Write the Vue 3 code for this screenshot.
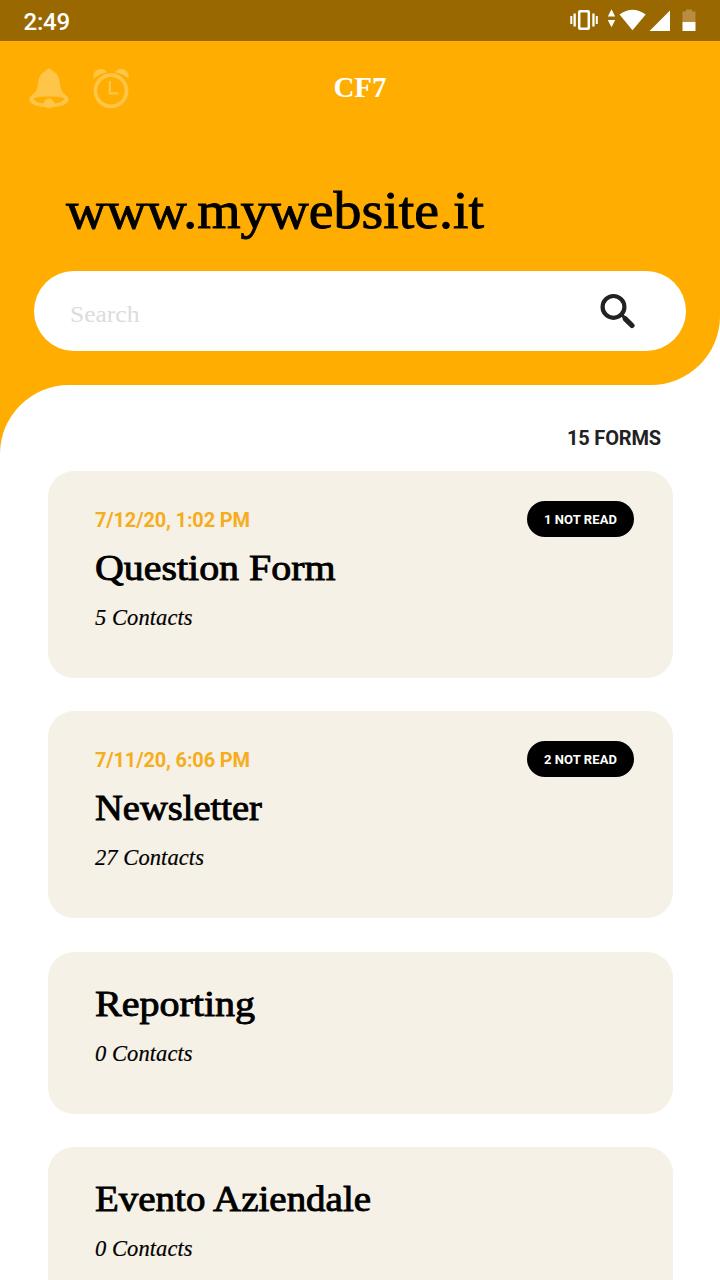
<script setup>
const forms = [
  { date: '7/12/20, 1:02 PM', unread: 1, name: 'Question Form', contacts: 5, stretch: 1.108 },
  { date: '7/11/20, 6:06 PM', unread: 2, name: 'Newsletter', contacts: 27, stretch: 1.07 },
  { name: 'Reporting', contacts: 0, stretch: 1.112 },
  { name: 'Evento Aziendale', contacts: 0, stretch: 1.083 },
]
</script>

<template>
  <div class="screen">
    <header class="top">
      <div class="status">
        <span class="clock">2:49</span>
        <svg class="indicators" width="130" height="24" viewBox="0 0 130 24" fill="#fff">
          <path d="M.3 8h2v8h-2zM3.500 5.500h2.300v13H3.500zM22.300 5.500h2.300v13h-2.300zM25.800 8h2v8h-2z" />
          <rect x="9.200" y="3.200" width="9.600" height="17.600" rx="1" fill="none" stroke="#fff" stroke-width="2.500" />
          <path d="M41.500 1.200l3.700 7.300h-7.400zM41.500 19.200l3.700-7.200h-7.400z" />
          <path d="M49.500 6.500Q62.500-3 75.700 6.500L62.500 22.200z" />
          <path d="M100 2.500V23H79.500z" />
          <path d="M116 1.500h6v2h3.500v10.500h-13V3.500h3.500z" fill="#b98d3f" />
          <path d="M112.500 14h13v9h-13z" />
        </svg>
      </div>
      <div class="toolbar">
        <div class="tools">
          <svg width="40" height="42" viewBox="0 0 40 42" fill="#ffc549">
            <path d="M20 .5c1.500 0 2.600 1 3.200 2.600C28.500 5 30.300 10 30.900 15.500c.7 6.500 2.400 8.500 5.400 11 2.200 1.700 3.400 3.200 3.400 5.300 0 4.500-8.700 7.500-19.700 7.500S.3 36.300.3 31.800c0-2.100 1.200-3.600 3.400-5.300 3-2.500 4.700-4.500 5.400-11C9.700 10 11.500 5 16.800 3.100 17.400 1.500 18.500.5 20 .5z" />
            <path d="M4.500 30.500C8 27.800 32 27.800 35.500 30.500 34 33.500 30 35 25.500 35.500 24 30.500 16 30.500 14.500 35.500 10 35 6 33.500 4.500 30.500z" fill="#ffad00" />
            <circle cx="20" cy="35.500" r="5" />
          </svg>
          <svg width="36" height="42" viewBox="0 0 36 42" fill="#ffc549">
            <path d="M.5 10.500C-.5 4.500 3.500.8 8 1c2.800.1 4.800 1.300 6 3.200C8.500 5 4 7.500.5 10.500zM35.500 10.500C36.500 4.500 32.500.8 28 1c-2.800.1-4.800 1.300-6 3.200 5.500.8 10 3.300 13.500 6.300z" />
            <circle cx="18" cy="22.800" r="15.600" fill="none" stroke="#ffc549" stroke-width="3.700" />
            <path d="M16.800 13v12.300h8.700" fill="none" stroke="#ffc549" stroke-width="2.200" />
          </svg>
        </div>
        <div class="brand">CF7</div>
      </div>
      <h1 class="site">www.mywebsite.it</h1>
      <div class="search">
        <span class="hint">Search</span>
        <svg width="36" height="36" viewBox="0 0 36 36">
          <circle cx="13.500" cy="13.900" r="10.900" fill="none" stroke="#222" stroke-width="4.200" />
          <path d="M21.500 21.700l3.500 3.500" stroke="#222" stroke-width="3.200" />
          <path d="M25.300 25.800l6.700 6.700" stroke="#222" stroke-width="5.200" stroke-linecap="round" />
        </svg>
      </div>
    </header>

    <main class="panel">
      <div class="count">15 FORMS</div>
      <section class="list">
        <article v-for="form in forms" :key="form.name" class="card" :class="{ dated: form.date }">
          <div v-if="form.date" class="meta">
            <span class="date">{{ form.date }}</span>
            <span class="badge">{{ form.unread }} NOT READ</span>
          </div>
          <h2 class="name" :style="{ transform: `scaleX(${form.stretch})` }">{{ form.name }}</h2>
          <p class="contacts">{{ form.contacts }} Contacts</p>
        </article>
      </section>
    </main>
  </div>
</template>

<style>
body {
  margin: 0;
  overflow: hidden;
}
</style>

<style scoped>
.screen {
  width: 720px;
  height: 1280px;
  overflow: hidden;
  background: linear-gradient(90deg, #ffad00 50%, #fff 50%);
  font-family: "Liberation Serif", serif;
  color: #000;
}
.top {
  height: 385px;
  box-sizing: border-box;
  overflow: hidden;
  background: #ffad00;
  border-bottom-right-radius: 69px;
}
.status {
  height: 41px;
  box-sizing: border-box;
  padding: 0 20px 0 23.5px;
  display: flex;
  justify-content: space-between;
  background: #996800;
}
.clock {
  font: 500 24px/44px Roboto, sans-serif;
  letter-spacing: -0.2px;
  color: #fff;
}
.indicators {
  margin-top: 8px;
}
.toolbar {
  height: 95px;
  display: grid;
  grid-template-columns: 1fr auto 1fr;
  align-items: center;
}
.tools {
  display: flex;
  gap: 24px;
  padding-left: 29px;
}
.brand {
  color: #fff;
  font-size: 29px;
  font-weight: 700;
  line-height: 34px;
  margin-bottom: 4px;
}
.site {
  width: max-content;
  margin: 45px 0 0 65.5px;
  font-size: 52px;
  font-weight: 400;
  line-height: 60px;
  transform: scaleX(1.073);
  transform-origin: left;
  -webkit-text-stroke: 0.9px #000;
}
.search {
  margin: 30px 34px 0;
  height: 80px;
  box-sizing: border-box;
  padding: 0 50px 0 36px;
  display: flex;
  align-items: center;
  justify-content: space-between;
  border-radius: 40px;
  background: #fff;
}
.hint {
  color: #dcdcdc;
  font-size: 23px;
  padding-top: 7px;
  transform: scaleX(1.11);
  transform-origin: left;
}
.panel {
  height: 895px;
  box-sizing: border-box;
  padding: 38px 47.5px 0;
  background: #fff;
  border-top-left-radius: 69px;
}
.count {
  height: 48px;
  margin-right: 11.5px;
  text-align: right;
  font: 700 20px/30px Roboto, sans-serif;
  letter-spacing: -0.15px;
  color: #222;
}
.list {
  display: flex;
  flex-direction: column;
  gap: 33.4px;
}
.card {
  flex: none;
  height: 162px;
  box-sizing: border-box;
  padding: 30px 38.5px 0 47.5px;
  border-radius: 26px;
  background: #f6f1e6;
}
.dated {
  height: 207px;
}
.meta {
  height: 36px;
  margin-bottom: 9px;
  display: flex;
  align-items: center;
  justify-content: space-between;
}
.date {
  font: 700 20px/36px Roboto, sans-serif;
  letter-spacing: -0.17px;
  padding-top: 2px;
  color: #f5ad1d;
}
.badge {
  width: 107px;
  border-radius: 18px;
  background: #000;
  color: #fff;
  text-align: center;
  font: 700 13px/37px Roboto, sans-serif;
  letter-spacing: 0.08px;
  height: 36px;
}
.name {
  width: max-content;
  margin: 0;
  font-size: 36px;
  font-weight: 400;
  line-height: 44px;
  transform-origin: left;
  -webkit-text-stroke: 0.9px #000;
}
.contacts {
  margin: 6px 0 0;
  font-size: 22.5px;
  font-style: italic;
  line-height: 44px;
  letter-spacing: 0.08px;
  -webkit-text-stroke: 0.2px #000;
}
</style>
